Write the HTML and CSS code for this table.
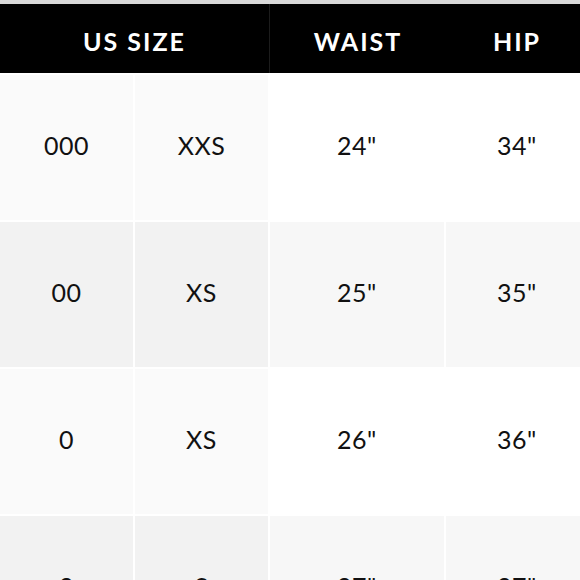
FILE: index.html
```html
<!DOCTYPE html>
<html>
<head>
<meta charset="utf-8">
<link rel="stylesheet" href="styles.css">
</head>
<body>
<div class="page">
  <div class="topline"></div>
  <div class="chart">
    <div class="head span2">US SIZE</div>
    <div class="head">WAIST</div>
    <div class="head last">HIP</div>

    <div class="cell a">000</div>
    <div class="cell a">XXS</div>
    <div class="cell b">24"</div>
    <div class="cell b last">34"</div>

    <div class="cell c">00</div>
    <div class="cell c">XS</div>
    <div class="cell d">25"</div>
    <div class="cell d last">35"</div>

    <div class="cell a">0</div>
    <div class="cell a">XS</div>
    <div class="cell b">26"</div>
    <div class="cell b last">36"</div>

    <div class="cell c">2</div>
    <div class="cell c">S</div>
    <div class="cell d">27"</div>
    <div class="cell d last">37"</div>
  </div>
</div>
</body>
</html>
```

FILE: styles.css
```css
html, body {
  margin: 0;
  padding: 0;
  background: #ffffff;
}
.page {
  width: 580px;
  height: 580px;
  overflow: hidden;
  font-family: Lato, "Noto Sans", sans-serif;
}
.topline {
  height: 4px;
  background: #d9d9d9;
}
.chart {
  display: grid;
  grid-template-columns: 133px 133px 174px 134px;
  grid-template-rows: 69px repeat(4, 145px);
  column-gap: 2px;
  row-gap: 2px;
  background: #ffffff;
}
.head {
  background: #000000;
  color: #ffffff;
  font-weight: 700;
  font-size: 25px;
  letter-spacing: 2px;
  display: flex;
  align-items: center;
  justify-content: center;
  margin-right: -2px;
  padding-top: 4px;
}
.span2 {
  grid-column: span 2;
  border-right: 1px solid #1c1c1c;
}
.head.last {
  margin-right: 0;
}
.last {
  padding-left: 8px;
}
.cell {
  display: flex;
  align-items: center;
  justify-content: center;
  font-size: 25px;
  color: #111111;
  letter-spacing: 0.5px;
  padding-bottom: 5px;
}
.a { background: #fafafa; }
.b { background: #ffffff; }
.c { background: #f2f2f2; }
.d { background: #f7f7f7; }
```
